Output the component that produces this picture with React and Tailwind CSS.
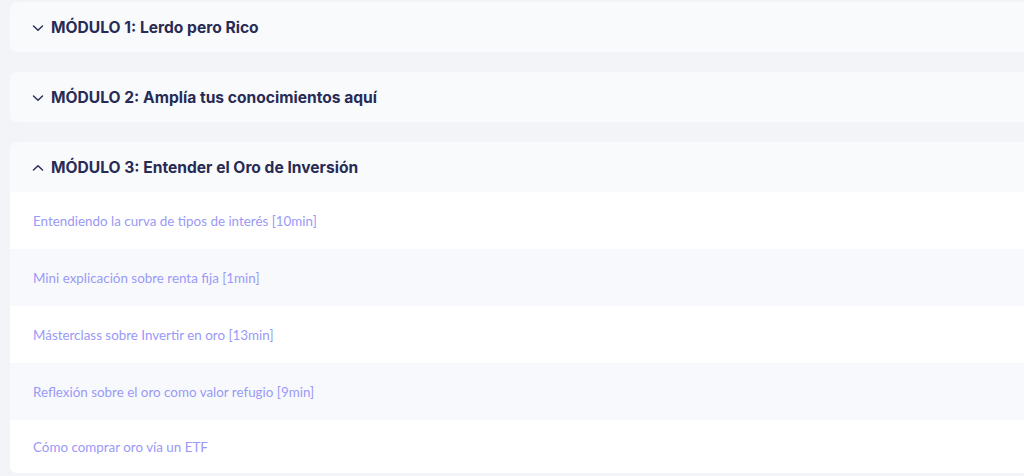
import React from "react";

const modules = [
  { title: "MÓDULO 1: Lerdo pero Rico", open: false },
  { title: "MÓDULO 2: Amplía tus conocimientos aquí", open: false },
  {
    title: "MÓDULO 3: Entender el Oro de Inversión",
    open: true,
    lessons: [
      "Entendiendo la curva de tipos de interés [10min]",
      "Mini explicación sobre renta fija [1min]",
      "Másterclass sobre Invertir en oro [13min]",
      "Reflexión sobre el oro como valor refugio [9min]",
      "Cómo comprar oro vía un ETF",
    ],
  },
];

function Chevron({ up }) {
  return (
    <svg width="12" height="12" viewBox="0 0 12 12" fill="none" className="shrink-0">
      <path
        d={up ? "M1.5 8 L6 3.8 L10.5 8" : "M1.5 4 L6 8.2 L10.5 4"}
        stroke="#2b2f5c"
        strokeWidth="1.5"
        strokeLinecap="round"
        strokeLinejoin="round"
      />
    </svg>
  );
}

export default function App() {
  return (
    <div className="w-[1024px] h-[476px] overflow-hidden bg-[#f3f4f7] pl-[10px] pt-[2px] font-['Inter',sans-serif]">
      <div className="flex flex-col gap-[20px] w-[1030px]">
        {modules.map((m) => (
          <div key={m.title} className="rounded-[7px] bg-[#f9fafc] overflow-hidden">
            <div className="h-[50px] flex items-center gap-[7px] pl-[22px] pt-[2px]">
              <Chevron up={m.open} />
              <span className="text-[15.6px] font-bold text-[#272b55]">{m.title}</span>
            </div>
            {m.open && (
              <div className="flex flex-col">
                {m.lessons.map((l, i) => (
                  <div
                    key={l}
                    className={`flex items-center pl-[23px] pt-[2px] ${i === 4 ? "h-[53px]" : "h-[57px]"} ${
                      i % 2 === 0 ? "bg-white" : "bg-[#f8f9fc]"
                    }`}
                  >
                    <span className="text-[13.4px] text-[#9a99f6] font-['Lato',sans-serif]">{l}</span>
                  </div>
                ))}
              </div>
            )}
          </div>
        ))}
      </div>
    </div>
  );
}
